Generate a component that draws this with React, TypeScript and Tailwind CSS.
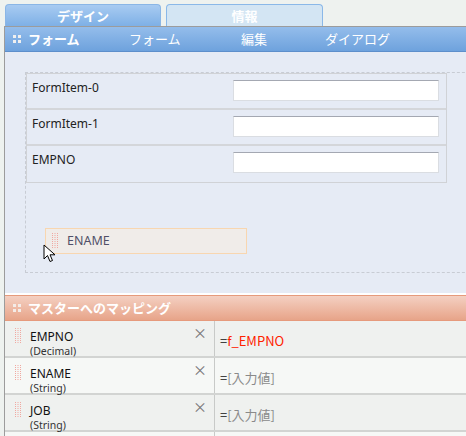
import React from "react";

const jp = { fontFamily: '"Noto Sans CJK JP", "Noto Sans", sans-serif' };

function Grip4({ color = "#ffffff" }: { color?: string }) {
  return (
    <svg width="9" height="9" viewBox="0 0 9 9">
      <rect x="0" y="0" width="3" height="3" fill={color} />
      <rect x="5" y="0" width="3" height="3" fill={color} />
      <rect x="0" y="5" width="3" height="3" fill={color} />
      <rect x="5" y="5" width="3" height="3" fill={color} />
    </svg>
  );
}

function DotGrip() {
  const dots = [];
  for (let r = 0; r < 8; r++) {
    for (let c = 0; c < 3; c++) {
      dots.push(<rect key={`${r}-${c}`} x={c * 2.5} y={r * 2} width="1" height="1" fill="#f0a8a0" />);
    }
  }
  return (
    <svg width="7" height="16" viewBox="0 0 7 16">
      {dots}
    </svg>
  );
}

function MapRow({ name, type, value, active, bg }: { name: string; type: string; value: string; active?: boolean; bg: string }) {
  return (
    <div className={`flex h-[37px] border-b-2 border-[#d2d4d2] ${bg}`}>
      <div className="w-[210px] border-r border-[#c8cac8] flex relative">
        <div className="pl-[10px] pt-[7px]">
          <DotGrip />
        </div>
        <div className="pl-[8px] pt-[10px] leading-none">
          <div className="text-[12px] text-[#111]" style={{ fontFamily: '"Noto Sans", sans-serif' }}>{name}</div>
          <div className="text-[10.5px] text-[#333] mt-[3px]" style={{ fontFamily: '"Noto Sans", sans-serif' }}>{type}</div>
        </div>
        <div className="absolute right-[7px] top-[4px] text-[14px] text-[#777] leading-none">×</div>
      </div>
      <div className="flex-1 pl-[5px] pt-[13px] text-[13px] leading-none" style={jp}>
        <span className="text-[#111]">=</span>
        <span className={active ? "text-[#ff2200]" : "text-[#8a8a8a]"}>{value}</span>
      </div>
    </div>
  );
}

function FormRow({ label, last }: { label: string; last?: boolean }) {
  return (
    <div className={`flex h-[36px] ${last ? "" : "border-b-2 border-[#d4d6da]"}`}>
      <div className="w-[206px] pl-[5px] pt-[5px] text-[12px] text-[#222]" style={{ fontFamily: '"Noto Sans", sans-serif' }}>
        {label}
      </div>
      <div className="pt-[6px]">
        <div className="w-[206px] h-[21px] bg-white border border-[#dadde2] border-t-[#a4a8b2]" />
      </div>
    </div>
  );
}

export default function App() {
  return (
    <div className="w-[466px] h-[436px] overflow-hidden bg-[#eef2ef] relative" style={jp}>
      {/* Tabs */}
      <div className="flex pl-[5px] pt-[4px] gap-[5px] h-[26px]">
        <div className="w-[156px] h-[22px] rounded-t-[4px] border border-b-0 border-[#8ab6e6] bg-gradient-to-b from-[#a8cbf1] to-[#7eb0e6] flex items-center justify-center text-white text-[13px] font-bold">
          デザイン
        </div>
        <div className="w-[157px] h-[22px] rounded-t-[4px] border border-b-0 border-[#8ab8e8] bg-[#d3e5f3] flex items-center justify-center text-white text-[13px] font-bold">
          情報
        </div>
      </div>

      {/* Form panel */}
      <div className="ml-[4px] border-l border-t border-[#9c9c9c]">
        <div className="h-[25px] bg-gradient-to-b from-[#94bdeb] to-[#6ea2dd] border-b border-[#5e8fcb] flex items-center text-white text-[13px]">
          <div className="pl-[8px] pr-[6px] flex items-center">
            <Grip4 color="#f0f0f0" />
          </div>
          <span className="font-bold w-[101px]">フォーム</span>
          <span className="w-[112px]">フォーム</span>
          <span className="w-[84px]">編集</span>
          <span>ダイアログ</span>
        </div>
        <div className="h-[241px] bg-[#e6ebf5] pt-[20px] pl-[20px] relative">
          <div className="h-[201px] w-[460px] border border-dashed border-[#c8ccd4] border-r-0">
            <div className="w-[421px] border border-[#d0d2d6]">
              <FormRow label="FormItem-0" />
              <FormRow label="FormItem-1" />
              <FormRow label="EMPNO" last />
            </div>
            <div className="ml-[19px] mt-[45px] w-[202px] h-[26px] bg-[#f0ece9] border border-[#f8d6b0] flex items-center">
              <div className="pl-[6px] pr-[8px] flex items-center">
                <DotGrip />
              </div>
              <span className="text-[12.5px] text-[#505068]" style={{ fontFamily: '"Noto Sans", sans-serif' }}>ENAME</span>
            </div>
          </div>
          {/* cursor */}
          <svg className="absolute left-[38px] top-[192px]" width="14" height="20" viewBox="0 0 14 20">
            <path d="M1 1 L1 15 L4.5 11.5 L7 17.5 L9.5 16.5 L7 10.8 L12 10.8 Z" fill="#ffffff" stroke="#000000" strokeWidth="1" strokeLinejoin="miter" />
          </svg>
        </div>
        <div className="h-[2px] bg-white" />
      </div>

      {/* Mapping panel */}
      <div className="ml-[4px] border-l border-[#9c9c9c]">
        <div className="h-[26px] bg-gradient-to-b from-[#f4d0c2] to-[#e7a489] border-t border-[#e69a7c] border-b border-[#e0a088] flex items-center text-white text-[13px] font-bold">
          <div className="pl-[8px] pr-[6px] flex items-center">
            <Grip4 color="#f4ece8" />
          </div>
          <span>マスターへのマッピング</span>
        </div>
        <MapRow name="EMPNO" type="(Decimal)" value="f_EMPNO" active bg="bg-[#eff1ef]" />
        <MapRow name="ENAME" type="(String)" value="[入力値]" bg="bg-[#f6f8f6]" />
        <MapRow name="JOB" type="(String)" value="[入力値]" bg="bg-[#eff1ef]" />
        <div className="flex h-[37px] bg-[#f6f8f6]">
          <div className="w-[210px] border-r border-[#c8cac8]" />
        </div>
      </div>
    </div>
  );
}
